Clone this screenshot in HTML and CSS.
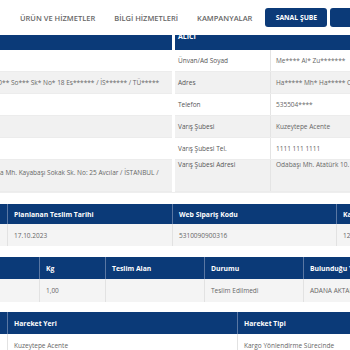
FILE: index.html
```html
<!DOCTYPE html>
<html lang="tr">
<head>
  <meta charset="UTF-8" />
  <meta name="viewport" content="width=device-width, initial-scale=1" />
  <title>Kargo Takip</title>
  <link rel="stylesheet" href="styles.css">
</head>
<body>

  <header class="topbar">
    <nav class="menu">
      <a href="#">ÜRÜN VE HİZMETLER</a>
      <a href="#">BİLGİ HİZMETLERİ</a>
      <a href="#">KAMPANYALAR</a>
    </nav>
    <div class="actions">
      <a href="#" class="btn">SANAL ŞUBE</a>
      <a href="#" class="btn">KREDİ</a>
    </div>
  </header>

  <main class="page">
    <section class="parties">
      <div class="party sender">
        <div class="party-head"></div>
        <div class="row"><span class="val"></span></div>
        <div class="row"><span class="val shift">O** So*** Sk* No* 18 Es****** / İS****** / TÜ*****</span></div>
        <div class="row"><span class="val"></span></div>
        <div class="row"><span class="val"></span></div>
        <div class="row"><span class="val"></span></div>
        <div class="row tall"><span class="val shift low">şa Mh. Kayabaşı Sokak Sk. No: 25 Avcılar / İSTANBUL /</span></div>
      </div>

      <div class="party receiver">
        <div class="party-head">ALICI</div>
        <div class="row"><span class="key">Ünvan/Ad Soyad</span><span class="val">Me**** Al* Zu*******</span></div>
        <div class="row"><span class="key">Adres</span><span class="val">Ha***** Mh* Ha***** Ca** Sk*</span></div>
        <div class="row"><span class="key">Telefon</span><span class="val">535504****</span></div>
        <div class="row"><span class="key">Varış Şubesi</span><span class="val">Kuzeytepe Acente</span></div>
        <div class="row"><span class="key">Varış Şubesi Tel.</span><span class="val">1111 111 1111</span></div>
        <div class="row tall"><span class="key">Varış Şubesi Adresi</span><span class="val">Odabaşı Mh. Atatürk 10. Sk.</span></div>
      </div>
    </section>

    <div class="tbl t1">
      <div class="tr head">
        <span></span>
        <span>Planlanan Teslim Tarihi</span>
        <span>Web Sipariş Kodu</span>
        <span>Kargo Takip No</span>
      </div>
      <div class="tr data">
        <span></span>
        <span>17.10.2023</span>
        <span>5310090900316</span>
        <span>1234567</span>
      </div>
    </div>

    <div class="tbl t2">
      <div class="tr head">
        <span></span>
        <span>Kg</span>
        <span>Teslim Alan</span>
        <span>Durumu</span>
        <span>Bulunduğu Yer</span>
      </div>
      <div class="tr data">
        <span></span>
        <span>1,00</span>
        <span></span>
        <span>Teslim Edilmedi</span>
        <span>ADANA AKTARMA</span>
      </div>
    </div>

    <div class="tbl t3">
      <div class="tr head">
        <span></span>
        <span>Hareket Yeri</span>
        <span>Hareket Tipi</span>
      </div>
      <div class="tr data">
        <span></span>
        <span>Kuzeytepe Acente</span>
        <span>Kargo Yönlendirme Sürecinde</span>
      </div>
    </div>
  </main>

</body>
</html>
```

FILE: styles.css
```css
* {
  box-sizing: border-box;
}

body {
  margin: 0;
  padding: 0;
  width: 350px;
  height: 350px;
  overflow: hidden;
  background: #fff;
  font-family: "Open Sans", "Liberation Sans", sans-serif;
  font-size: 6.5px;
  color: #555;
}

a {
  text-decoration: none;
}

/* top bar */

.topbar {
  position: relative;
  z-index: 2;
  height: 35px;
  display: flex;
  align-items: center;
  background: #fff;
  padding-left: 20px;
  white-space: nowrap;
}

.menu {
  display: flex;
  gap: 19px;
}

.menu a {
  color: #666;
  font-size: 7.5px;
  font-weight: 600;
}

.actions {
  display: flex;
  gap: 3px;
  margin-left: 13px;
}

.btn {
  display: flex;
  align-items: center;
  justify-content: center;
  width: 62px;
  height: 19px;
  border-radius: 3px;
  background: #0b3a78;
  color: #fff;
  font-size: 6.8px;
  font-weight: 700;
}

/* sender / receiver */

.parties {
  display: grid;
  grid-template-columns: 172px 1fr;
  gap: 3px;
  border-bottom: 1px solid #eee;
}

.party-head {
  height: 15px;
  background: #0b3a78;
  color: #fff;
  font-weight: 700;
  font-size: 7px;
  line-height: 4px;
  padding-left: 3px;
  overflow: hidden;
}

.row {
  display: grid;
  grid-template-columns: 95px 1fr;
  height: 22px;
  align-items: center;
  border-bottom: 1px solid #ececec;
  white-space: nowrap;
  overflow: hidden;
}

.row:nth-of-type(odd) {
  background: #f1f1f1;
}

.row.tall {
  height: 32px;
  align-items: start;
}

.sender .row {
  grid-template-columns: 1fr;
}

.key {
  padding-left: 3px;
  color: #555;
}

.val {
  padding-left: 5px;
  color: #666;
  overflow: hidden;
}

.receiver .val {
  height: 100%;
  display: flex;
  align-items: center;
  border-left: 1px solid #e4e4e4;
}

.receiver .tall .val {
  align-items: start;
  height: 32px;
}

.val.shift {
  margin-left: -8px;
}

.val.low {
  padding-top: 8px;
}

/* tables */

.tbl {
  white-space: nowrap;
}

.tr {
  display: grid;
  overflow: hidden;
}

.tr span {
  display: flex;
  align-items: center;
  padding-left: 6px;
  overflow: hidden;
}

.tr.head {
  background: #0b3a78;
  color: #fff;
  font-weight: 700;
  font-size: 6.8px;
}

.tr.head span + span {
  border-left: 1px solid #5a77a3;
}

.tr.data {
  background: #f4f4f4;
  color: #666;
}

.tr.data span + span {
  border-left: 1px solid #e2e2e2;
}

.t1 {
  margin-top: 11px;
}

.t1 .tr {
  grid-template-columns: 7px 165px 164px 100px;
}

.t1 .head {
  height: 20px;
}

.t1 .data {
  height: 22px;
}

.t2 {
  margin-top: 11px;
}

.t2 .tr {
  grid-template-columns: 39px 66px 99px 99px 100px;
}

.t2 .head {
  height: 22px;
}

.t2 .data {
  height: 23px;
}

.t3 {
  margin-top: 10px;
}

.t3 .tr {
  grid-template-columns: 7px 230px 150px;
}

.t3 .head {
  height: 22px;
}

.t3 .data {
  height: 22px;
  background: #fff;
}
```
